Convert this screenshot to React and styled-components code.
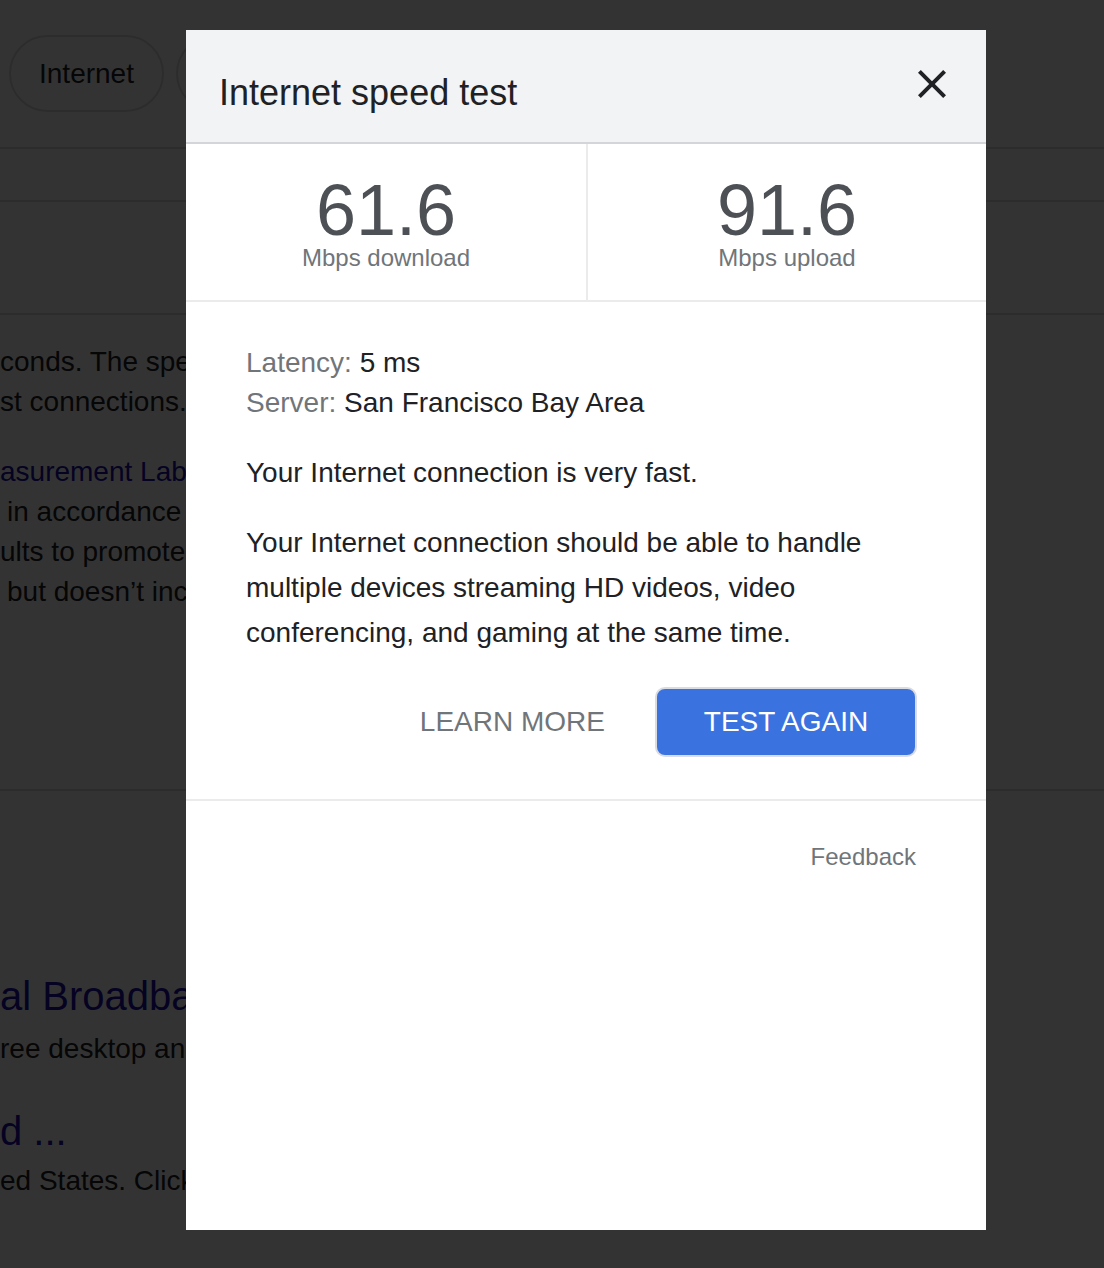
import React from 'react';
import styled, { createGlobalStyle } from 'styled-components';

const GlobalStyle = createGlobalStyle`
  html, body {
    margin: 0;
    padding: 0;
    background: #333333;
  }
  body {
    font-family: "Liberation Sans", Arial, sans-serif;
  }
`;

// the page underneath the dialog
const Page = styled.div`
  width: 1104px;
  height: 1268px;
  background: #ffffff;
  overflow: hidden;
  color: #202124;
  font-size: 28px;
`;

const ChipBar = styled.div`
  height: 149px;
  display: flex;
  align-items: flex-start;
  gap: 12px;
  padding: 35px 0 0 9px;
  box-sizing: border-box;
  border-bottom: 2px solid #dadce0;
`;

const Chip = styled.div`
  height: 77px;
  min-width: ${p => p.w || 0}px;
  padding: 0 28px;
  box-sizing: border-box;
  display: flex;
  align-items: center;
  border: 2px solid #dadce0;
  border-radius: 40px;
  font-size: 28px;
`;

const Band = styled.div`
  height: ${p => p.h}px;
  border-bottom: 2px solid #dadce0;
`;

const TextSection = styled.div`
  height: 476px;
  padding-top: 27px;
  box-sizing: border-box;
  border-bottom: 2px solid #dadce0;
`;

// only the strip left of the dialog is visible
const Clip = styled.div`
  width: 186px;
  overflow: hidden;
`;

const Line = styled.div`
  white-space: nowrap;
  line-height: 40px;
  font-size: ${p => (p.big ? 40 : 28)}px;
  color: ${p => (p.link ? '#1a0dab' : '#202124')};
  padding-left: ${p => p.indent || 0}px;
  margin-top: ${p => p.gap || 0}px;
`;

const Overlay = styled.div`
  position: fixed;
  inset: 0;
  background: rgba(0, 0, 0, 0.8);
`;

const Dialog = styled.div`
  position: fixed;
  left: 186px;
  top: 30px;
  width: 800px;
  height: 1200px;
  background: #ffffff;
  display: flex;
  flex-direction: column;
`;

const Header = styled.div`
  height: 112px;
  background: #f1f3f4;
  border-bottom: 2px solid #d3d5d8;
  display: flex;
  justify-content: space-between;
  align-items: flex-start;
  padding: 0 30px 0 33px;
`;

const Title = styled.h1`
  margin: 43px 0 0;
  font-size: 36px;
  line-height: 40px;
  font-weight: 400;
  color: #202124;
`;

const CloseButton = styled.button`
  margin-top: 30px;
  width: 48px;
  height: 48px;
  padding: 0;
  border: none;
  background: transparent;
  display: flex;
`;

const Stats = styled.div`
  display: grid;
  grid-template-columns: 1fr 1fr;
  border-bottom: 2px solid #ebebeb;
`;

const Stat = styled.div`
  padding: 30px 0;
  display: flex;
  flex-direction: column;
  align-items: center;
  & + & {
    border-left: 2px solid #ebebeb;
  }
`;

const Number = styled.div`
  font-size: 72px;
  line-height: 72px;
  color: #4d5156;
`;

const Unit = styled.div`
  font-size: 24px;
  line-height: 24px;
  color: #70757a;
`;

const Body = styled.div`
  padding: 41px 69px 42px 60px;
  border-bottom: 2px solid #ebebeb;
  font-size: 28px;
  color: #202124;
`;

const InfoRow = styled.div`
  line-height: 40px;
`;

const Key = styled.span`
  color: #70757a;
`;

const Summary = styled.p`
  margin: 30px 0 0;
  line-height: 40px;
`;

const Detail = styled.p`
  margin: 28px 0 0;
  line-height: 44.8px;
`;

const Actions = styled.div`
  margin-top: 32px;
  display: flex;
  justify-content: flex-end;
  align-items: center;
  gap: 50px;
`;

const TextButton = styled.button`
  border: none;
  background: transparent;
  padding: 0;
  font-family: inherit;
  font-size: 28px;
  color: #70757a;
`;

const PrimaryButton = styled.button`
  width: 262px;
  height: 70px;
  border: 2px solid #dadce0;
  border-radius: 10px;
  background: #3a73e0;
  color: #ffffff;
  font-family: inherit;
  font-size: 28px;
`;

const Footer = styled.div`
  padding: 42px 70px 0 0;
  display: flex;
  justify-content: flex-end;
`;

const FeedbackLink = styled.span`
  font-size: 24px;
  line-height: 28px;
  color: #70757a;
`;

const CloseIcon = () => (
  <svg width="48" height="48" viewBox="0 0 24 24">
    <path
      fill="#202124"
      d="M19 6.41L17.59 5 12 10.59 6.41 5 5 6.41 10.59 12 5 17.59 6.41 19 12 13.41 17.59 19 19 17.59 13.41 12z"
    />
  </svg>
);

function App() {
  return (
    <>
      <GlobalStyle />
      <Page>
        <ChipBar>
          <Chip>Internet</Chip>
          <Chip w={200} />
        </ChipBar>
        <Band h={51} />
        <Band h={111} />
        <TextSection>
          <Clip>
            <Line>conds. The speed test usually transfers less than 40 MB of data</Line>
            <Line>st connections.</Line>
            <Line link gap={30}>asurement Lab (M-Lab) and your IP address is shared with them</Line>
            <Line indent={7}>in accordance with their privacy policy. M-Lab conducts the test</Line>
            <Line>ults to promote Internet research. Published information includes</Line>
            <Line indent={7}>but doesn’t include any other information about you as a user.</Line>
          </Clip>
        </TextSection>
        <Clip>
          <Line link big gap={185}>al Broadband Speed Test</Line>
          <Line gap={13}>ree desktop and mobile speed test for home connections</Line>
          <Line link big gap={42}>d ...</Line>
          <Line gap={10}>ed States. Click the button to start measuring your speed</Line>
        </Clip>
      </Page>
      <Overlay />
      <Dialog>
        <Header>
          <Title>Internet speed test</Title>
          <CloseButton aria-label="Close">
            <CloseIcon />
          </CloseButton>
        </Header>
        <Stats>
          <Stat>
            <Number>61.6</Number>
            <Unit>Mbps download</Unit>
          </Stat>
          <Stat>
            <Number>91.6</Number>
            <Unit>Mbps upload</Unit>
          </Stat>
        </Stats>
        <Body>
          <InfoRow><Key>Latency:</Key> 5 ms</InfoRow>
          <InfoRow><Key>Server:</Key> San Francisco Bay Area</InfoRow>
          <Summary>Your Internet connection is very fast.</Summary>
          <Detail>
            Your Internet connection should be able to handle multiple devices streaming HD videos, video
            conferencing, and gaming at the same time.
          </Detail>
          <Actions>
            <TextButton>LEARN MORE</TextButton>
            <PrimaryButton>TEST AGAIN</PrimaryButton>
          </Actions>
        </Body>
        <Footer>
          <FeedbackLink>Feedback</FeedbackLink>
        </Footer>
      </Dialog>
    </>
  );
}

export default App;
